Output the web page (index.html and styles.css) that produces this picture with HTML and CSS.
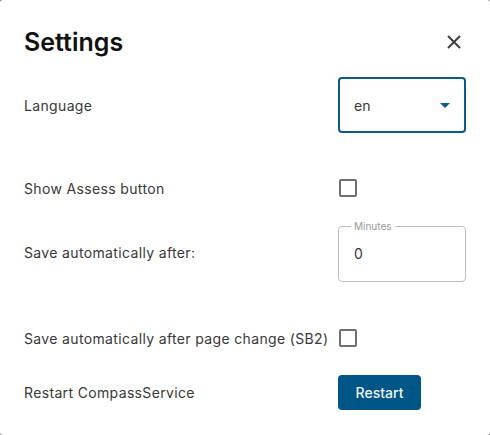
FILE: index.html
```html
<!DOCTYPE html>
<html lang="en">
<head>
    <meta charset="UTF-8">
    <meta name="viewport" content="width=device-width, initial-scale=1.0">
    <title>Settings</title>
    <link rel="stylesheet" href="styles.css">
</head>
<body>
    <div class="dialog">
        <div class="dialog-head">
            <div class="dialog-title">Settings</div>
            <button class="close-btn" aria-label="close">
                <svg width="14" height="14" viewBox="0 0 14 14">
                    <path d="M1 1 L13 13 M13 1 L1 13" stroke="#404040" stroke-width="2" fill="none"/>
                </svg>
            </button>
        </div>

        <div class="row row-field">
            <div class="label">Language</div>
            <div class="select">
                <span>en</span>
                <span class="arrow"></span>
            </div>
        </div>

        <div class="row">
            <div class="label">Show Assess button</div>
            <div class="checkbox"></div>
        </div>

        <div class="row row-field row-minutes">
            <div class="label">Save automatically after:</div>
            <fieldset class="outlined">
                <legend>Minutes</legend>
                <span class="value">0</span>
            </fieldset>
        </div>

        <div class="row">
            <div class="label">Save automatically after page change (SB2)</div>
            <div class="checkbox"></div>
        </div>

        <div class="row">
            <div class="label">Restart CompassService</div>
            <button class="restart-btn">Restart</button>
        </div>
    </div>
</body>
</html>
```

FILE: styles.css
```css
body{
    margin: 0;
    background-color: #8a8a8a;
    font-family: Inter, Roboto, 'Liberation Sans', sans-serif;
}
.dialog{
    width: 490px;
    height: 435px;
    box-sizing: border-box;
    padding: 24px 24px 0 24px;
    background-color: #fff;
    border-radius: 3px;
}
.dialog-head{
    display: flex;
    justify-content: space-between;
    align-items: center;
    height: 36px;
    margin-bottom: 17px;
}
.dialog-title{
    font-family: Inter, 'Noto Sans', sans-serif;
    font-size: 25px;
    font-weight: 600;
    color: #111;
}
.close-btn{
    border: 0;
    background: none;
    padding: 0;
    margin-right: 5px;
    width: 14px;
    height: 14px;
    display: flex;
    cursor: pointer;
}
.row{
    display: grid;
    grid-template-columns: 314px 128px;
    align-items: center;
    min-height: 36px;
    margin-bottom: 18px;
}
.row-field{
    margin-bottom: 37px;
}
.row-minutes{
    margin-bottom: 40px;
}
.label{
    font-size: 14px;
    letter-spacing: 0.35px;
    color: #383838;
}
.select{
    box-sizing: border-box;
    height: 56px;
    border: 2px solid #0d5a8a;
    border-radius: 4px;
    display: flex;
    align-items: center;
    justify-content: space-between;
    padding: 0 14px;
    font-size: 14px;
    color: #383838;
}
.arrow{
    width: 0;
    height: 0;
    border-left: 5px solid transparent;
    border-right: 5px solid transparent;
    border-top: 5px solid #0d5a8a;
}
.checkbox{
    box-sizing: border-box;
    width: 18px;
    height: 18px;
    margin-left: 1px;
    border: 2px solid #6f6f6f;
    border-radius: 2px;
}
.outlined{
    box-sizing: border-box;
    height: 61px;
    margin: -3px 0 -2px 0;
    padding: 0 15px;
    border: 1px solid #bdbdbd;
    border-radius: 4px;
    display: flex;
    align-items: center;
}
.outlined legend{
    font-size: 10px;
    color: #9a9a9a;
    padding: 0 3px;
    margin-left: -3px;
    line-height: 10px;
}
.outlined .value{
    font-size: 14px;
    color: #383838;
    margin-top: -5px;
}
.restart-btn{
    width: 83px;
    height: 35px;
    border: 0;
    border-radius: 4px;
    background-color: #005587;
    color: #f2f6f9;
    font-family: Inter, 'Noto Sans', sans-serif;
    font-size: 14px;
    font-weight: 500;
    cursor: pointer;
}
```
